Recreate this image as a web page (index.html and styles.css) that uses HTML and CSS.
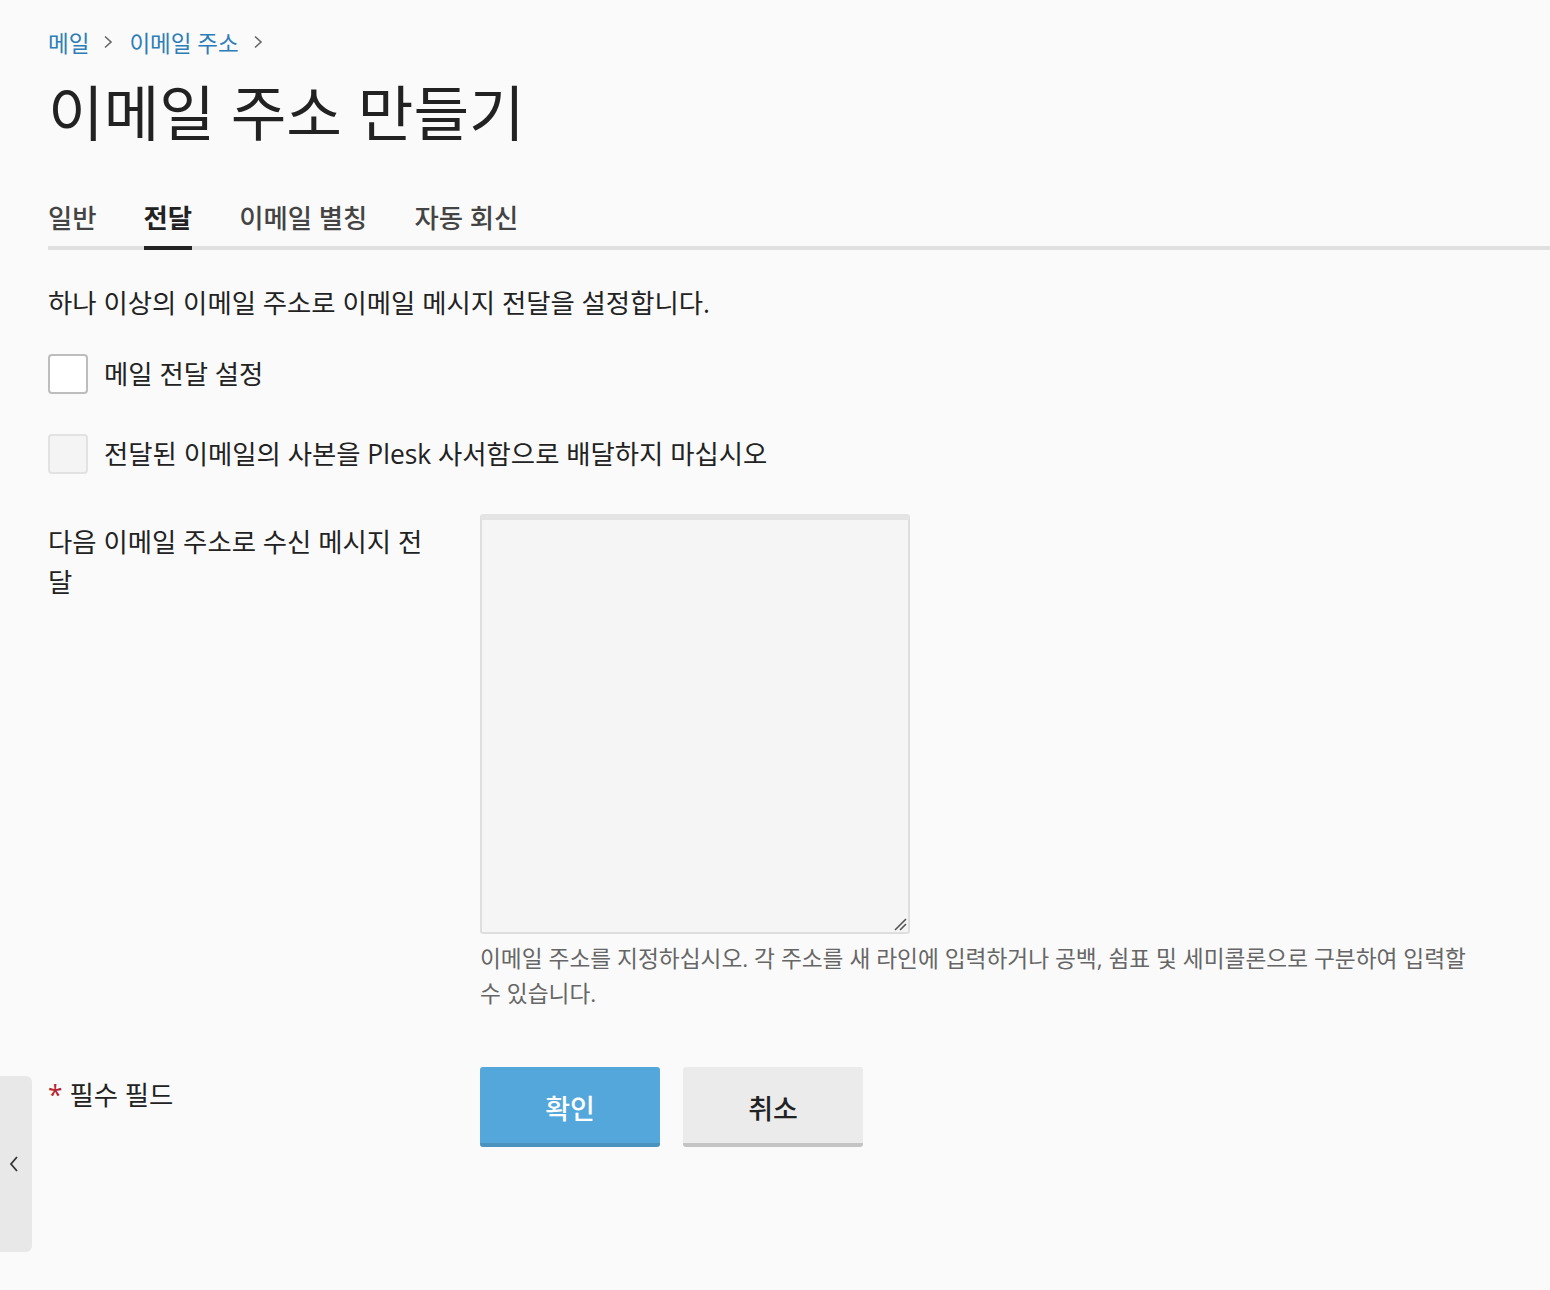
FILE: index.html
```html
<!DOCTYPE html>
<html lang="ko">
<head>
<meta charset="utf-8">
<title>이메일 주소 만들기</title>
<link rel="stylesheet" href="styles.css">
</head>
<body>
<div class="page">
  <nav class="breadcrumb">
    <a href="#">메일</a>
    <span class="sep"><svg width="12" height="16" viewBox="0 0 12 16"><path d="M3 2.5 L9 8 L3 13.5" fill="none" stroke="#666" stroke-width="1.6"/></svg></span>
    <a href="#">이메일 주소</a>
    <span class="sep"><svg width="12" height="16" viewBox="0 0 12 16"><path d="M3 2.5 L9 8 L3 13.5" fill="none" stroke="#666" stroke-width="1.6"/></svg></span>
  </nav>
  <h1 class="title">이메일 주소 만들기</h1>
  <div class="tabs">
    <a class="tab" href="#">일반</a>
    <a class="tab active" href="#">전달</a>
    <a class="tab" href="#">이메일 별칭</a>
    <a class="tab" href="#">자동 회신</a>
  </div>
  <p class="desc">하나 이상의 이메일 주소로 이메일 메시지 전달을 설정합니다.</p>
  <label class="check-row">
    <span class="box"></span>
    <span class="check-label">메일 전달 설정</span>
  </label>
  <label class="check-row disabled">
    <span class="box"></span>
    <span class="check-label">전달된 이메일의 사본을 Plesk 사서함으로 배달하지 마십시오</span>
  </label>
  <div class="form-row">
    <div class="form-label">다음 이메일 주소로 수신 메시지 전달</div>
    <div class="form-field">
      <div class="textarea">
        <svg class="grip" width="14" height="14" viewBox="0 0 14 14"><path d="M2 13 L13 2 M7 13 L13 7" stroke="#555" stroke-width="1.6"/></svg>
      </div>
      <div class="hint">이메일 주소를 지정하십시오. 각 주소를 새 라인에 입력하거나 공백, 쉼표 및 세미콜론으로 구분하여 입력할 수 있습니다.</div>
    </div>
  </div>
  <div class="form-row actions">
    <div class="form-label required"><span class="star">*</span> 필수 필드</div>
    <div class="buttons">
      <button class="btn primary">확인</button>
      <button class="btn">취소</button>
    </div>
  </div>
</div>
<div class="side-toggle">
  <svg width="12" height="20" viewBox="0 0 12 20"><path d="M9 3 L3 10 L9 17" fill="none" stroke="#333" stroke-width="1.8"/></svg>
</div>
</body>
</html>
```

FILE: styles.css
```css
html, body {
  margin: 0;
  padding: 0;
  background: #fafafa;
  font-family: "Open Sans", "Noto Sans CJK KR", sans-serif;
  color: #222;
}

.page {
  padding: 24px 0 0 48px;
}

.breadcrumb {
  display: flex;
  align-items: center;
  gap: 13px;
  font-size: 22.5px;
  height: 36px;
}

.breadcrumb a {
  color: #2d7db8;
  text-decoration: none;
}

.breadcrumb .sep {
  display: flex;
  align-items: center;
  margin-right: 2px;
}

.title {
  margin: 13px 0 0 0;
  font-size: 60.5px;
  font-weight: 400;
  line-height: 80px;
  color: #222;
}

.tabs {
  display: flex;
  gap: 47px;
  margin-top: 45px;
  border-bottom: 4px solid #e0e0e0;
}

.tab {
  font-size: 26.4px;
  line-height: 40px;
  padding-bottom: 8px;
  margin-bottom: -4px;
  border-bottom: 4px solid transparent;
  color: #444;
  text-decoration: none;
  font-weight: 500;
}

.tab.active {
  color: #222;
  font-weight: 700;
  border-bottom-color: #222;
}

.desc {
  margin: 33px 0 0 0;
  font-size: 26.4px;
  line-height: 40px;
}

.check-row {
  display: flex;
  align-items: center;
  gap: 16px;
  margin-top: 31px;
  font-size: 26.4px;
  line-height: 40px;
}

.check-row + .check-row {
  margin-top: 40px;
}

.box {
  width: 36px;
  height: 36px;
  border: 2px solid #bdbdbd;
  border-radius: 4px;
  background: #fff;
}

.check-row.disabled .box {
  border-color: #e2e2e2;
  background: #f4f4f4;
}

.form-row {
  display: flex;
  margin-top: 40px;
}

.form-label {
  width: 390px;
  flex: none;
  margin-right: 42px;
  font-size: 26.4px;
  line-height: 40px;
  padding-top: 8px;
}

.textarea {
  position: relative;
  width: 426px;
  border: 2px solid #dedede;
  border-top-width: 6px;
  border-top-color: #e4e4e4;
  border-radius: 3px;
  background: #f5f5f5;
  height: 412px;
}

.grip {
  position: absolute;
  right: 1px;
  bottom: 1px;
}

.hint {
  margin-top: 7px;
  font-size: 22.7px;
  line-height: 35px;
  color: #666;
  width: 1000px;
}

.actions {
  margin-top: 56px;
  padding-bottom: 140px;
}

.star {
  color: #b8232f;
}

.buttons {
  display: flex;
  gap: 23px;
}

.btn {
  width: 180px;
  height: 80px;
  border: none;
  border-bottom: 4px solid #c4c4c4;
  border-radius: 3px;
  background: #ebebeb;
  font-family: "Open Sans", "Noto Sans CJK KR", sans-serif;
  font-size: 27px;
  font-weight: 500;
  color: #222;
  padding: 4px 0 0 0;
}

.btn.primary {
  background: #53a7db;
  border-bottom-color: #4a93bf;
  color: #fff;
}

.side-toggle {
  position: absolute;
  left: 0;
  top: 1076px;
  width: 32px;
  height: 176px;
  background: #e8e8e8;
  border-radius: 0 6px 6px 0;
  display: flex;
  align-items: center;
  justify-content: center;
  padding-right: 4px;
  box-sizing: border-box;
}
```
